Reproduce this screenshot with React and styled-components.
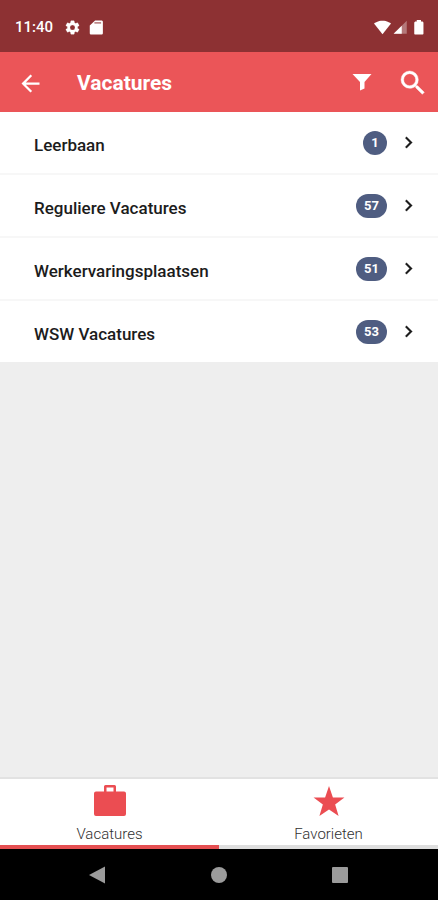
import React, { useState } from "react";
import styled, { createGlobalStyle } from "styled-components";

const GlobalStyle = createGlobalStyle`
  * {
    box-sizing: border-box;
  }

  body {
    margin: 0;
    font-family: Roboto, "Liberation Sans", sans-serif;
  }

  button {
    border: 0;
    padding: 0;
    background: none;
    color: inherit;
    font: inherit;
    cursor: pointer;
  }
`;

const Screen = styled.div`
  display: flex;
  flex-direction: column;
  min-height: 100vh;
  background: #eeeeee;
`;

const StatusBar = styled.div`
  display: flex;
  align-items: center;
  justify-content: space-between;
  height: 52px;
  padding: 2px 11px 0 15px;
  background: #8d3133;
  color: #fff;
`;

const StatusGroup = styled.div`
  display: flex;
  align-items: center;
  gap: ${({ $gap }) => $gap}px;
`;

const Clock = styled.span`
  margin-right: 4px;
  font-size: 15px;
  font-weight: 500;
  line-height: 20px;
`;

const Toolbar = styled.header`
  display: flex;
  align-items: center;
  height: 60px;
  padding: 2px 9px 0 17px;
  background: #eb5558;
  color: #fff;
`;

const Title = styled.h1`
  flex: 1;
  margin: 0 0 0 33px;
  font-size: 21px;
  font-weight: 700;
  line-height: 28px;
`;

const IconButton = styled.button`
  display: flex;
  align-items: center;
  justify-content: center;
  margin-left: ${({ $space }) => $space || 0}px;
`;

const Content = styled.main`
  flex: 1;
`;

const List = styled.ul`
  margin: 0;
  padding: 0;
  list-style: none;
  background: #fff;
`;

const ListItem = styled.li`
  & + & {
    border-top: 2px solid #f7f7f7;
  }
`;

const Row = styled.a`
  display: flex;
  align-items: center;
  height: 61px;
  padding: 0 18px 0 34px;
  color: #1c1c1c;
  text-decoration: none;
`;

const RowLabel = styled.span`
  flex: 1;
  padding-top: 5px;
  font-size: 17px;
  font-weight: 500;
  line-height: 22px;
`;

const Badge = styled.span`
  min-width: 24px;
  height: 24px;
  margin-right: 10px;
  padding: 0 8px;
  border-radius: 12px;
  background: #4f5d81;
  color: #fff;
  font-size: 13px;
  font-weight: 700;
  line-height: 24px;
  text-align: center;
`;

const TabBar = styled.nav`
  display: flex;
  border-top: 2px solid #e2e2e2;
  background: #fff;
`;

const Tab = styled.button`
  display: flex;
  flex: 1;
  flex-direction: column;
  align-items: center;
  height: 70px;
  padding-top: 4px;
  border-bottom: 4px solid ${({ $active }) => ($active ? "#e54f52" : "#dedede")};
  color: #eb4d52;
`;

const TabLabel = styled.span`
  margin-top: 6px;
  color: #303030;
  font-size: 15px;
  font-weight: 300;
  line-height: 18px;
`;

const SystemBar = styled.div`
  display: flex;
  align-items: center;
  justify-content: center;
  gap: 97px;
  height: 51px;
  background: #000;
  color: #9b9b9b;
`;

const Icon = ({ size, children, viewBox = "0 0 24 24" }) => (
  <svg width={size} height={size} viewBox={viewBox} fill="currentColor" aria-hidden="true">
    {children}
  </svg>
);

const BriefcaseIcon = () => (
  <Icon size={36} viewBox="0 0 36 36">
    <path
      fillRule="evenodd"
      d="M13.500 2h9a1.500 1.500 0 0 1 1.500 1.500V8.500h8a2 2 0 0 1 2 2V31a2 2 0 0 1-2 2H4a2 2 0 0 1-2-2V10.500a2 2 0 0 1 2-2h8V3.500A1.500 1.500 0 0 1 13.500 2zm1 2.500v4h7v-4z"
    />
  </Icon>
);

const StarIcon = () => (
  <Icon size={36}>
    <path d="M12 17.600l6.400 4.400-2.300-7.600L22.300 9.700h-7.700L12 2 9.400 9.700H1.700l6.200 4.700L5.600 22z" />
  </Icon>
);

const categories = [
  { id: 1, name: "Leerbaan", count: 1 },
  { id: 2, name: "Reguliere Vacatures", count: 57 },
  { id: 3, name: "Werkervaringsplaatsen", count: 51 },
  { id: 4, name: "WSW Vacatures", count: 53 },
];

const tabs = [
  { id: "vacatures", label: "Vacatures", icon: <BriefcaseIcon /> },
  { id: "favorieten", label: "Favorieten", icon: <StarIcon /> },
];

const App = () => {
  const [activeTab, setActiveTab] = useState("vacatures");

  return (
    <Screen>
      <GlobalStyle />

      <StatusBar>
        <StatusGroup $gap={7}>
          <Clock>11:40</Clock>
          <Icon size={17}>
            <path
              d="M19.140 12.940c.04-.3.06-.61.06-.94s-.02-.64-.07-.94l2.030-1.580a.49.49 0 0 0 .12-.61l-1.920-3.320a.49.49 0 0 0-.59-.22l-2.390.96a7 7 0 0 0-1.620-.94l-.36-2.540a.48.48 0 0 0-.48-.41h-3.840a.47.47 0 0 0-.47.41l-.36 2.540c-.59.24-1.130.57-1.620.94l-2.390-.96a.48.48 0 0 0-.59.22L2.740 8.870a.47.47 0 0 0 .12.61l2.030 1.580c-.05.3-.09.63-.09.94s.02.64.07.94l-2.030 1.580a.49.49 0 0 0-.12.61l1.920 3.320c.12.22.37.29.59.22l2.390-.96c.5.38 1.030.7 1.620.94l.36 2.540c.05.24.24.41.48.41h3.840c.24 0 .44-.17.47-.41l.36-2.540a7 7 0 0 0 1.620-.94l2.390.96c.22.08.47 0 .59-.22l1.920-3.320a.47.47 0 0 0-.12-.61zM12 15.600a3.600 3.600 0 1 1 0-7.200 3.600 3.600 0 0 1 0 7.200z"
              stroke="currentColor"
              strokeWidth="0.400"
            />
          </Icon>
          <Icon size={17}>
            <path d="M19 2h-9L2.500 9v11c0 1.100.9 2 2 2H19c1.100 0 2-.9 2-2V4c0-1.100-.9-2-2-2z" />
            <path d="M9 5.500h9.500" stroke="#8d3133" strokeWidth="2" opacity="0.700" />
          </Icon>
        </StatusGroup>
        <StatusGroup $gap={2}>
          <Icon size={17}>
            <path d="M12 21.500L24 6.500C23 5.500 18.500 2.500 12 2.500S1 5.500 0 6.500z" />
          </Icon>
          <Icon size={15}>
            <path d="M1 22L22 1v21z" opacity="0.350" />
            <path d="M1 22L14 9v13z" />
          </Icon>
          <Icon size={17}>
            <path d="M17 3.500h-1.500V1.500h-6v2H8C6.900 3.500 6 4.400 6 5.500v15c0 .9.600 1.500 1.500 1.500h10c.9 0 1.500-.6 1.500-1.500v-15c0-1.100-.9-2-2-2z" />
          </Icon>
        </StatusGroup>
      </StatusBar>

      <Toolbar>
        <IconButton type="button" aria-label="Terug">
          <Icon size={27}>
            <path d="M20 11H7.830l5.590-5.590L12 4l-8 8 8 8 1.410-1.410L7.830 13H20z" />
          </Icon>
        </IconButton>
        <Title>Vacatures</Title>
        <IconButton type="button" aria-label="Filter">
          <Icon size={20} viewBox="0 0 20 20">
            <path d="M.5 1h19l-7 8v6.500l-4.500 2V9z" />
          </Icon>
        </IconButton>
        <IconButton type="button" aria-label="Zoeken" $space={25}>
          <Icon size={32}>
            <path
              d="M15.500 14h-.79l-.28-.27A6.470 6.470 0 0 0 16 9.500 6.500 6.500 0 1 0 9.500 16c1.610 0 3.090-.59 4.230-1.570l.27.28v.79l5 4.990L20.490 19zm-6 0a4.500 4.500 0 1 1 0-9 4.500 4.500 0 0 1 0 9z"
              stroke="currentColor"
              strokeWidth="0.300"
            />
          </Icon>
        </IconButton>
      </Toolbar>

      <Content>
        <List>
          {categories.map((category) => (
            <ListItem key={category.id}>
              <Row href="#">
                <RowLabel>{category.name}</RowLabel>
                <Badge>{category.count}</Badge>
                <Icon size={23}>
                  <path
                    d="M10 6L8.590 7.410 13.170 12l-4.580 4.590L10 18l6-6z"
                    stroke="currentColor"
                    strokeWidth="0.300"
                  />
                </Icon>
              </Row>
            </ListItem>
          ))}
        </List>
      </Content>

      <TabBar>
        {tabs.map((tab) => (
          <Tab
            key={tab.id}
            type="button"
            $active={tab.id === activeTab}
            onClick={() => setActiveTab(tab.id)}
          >
            {tab.icon}
            <TabLabel>{tab.label}</TabLabel>
          </Tab>
        ))}
      </TabBar>

      <SystemBar>
        <IconButton type="button" aria-label="Vorige">
          <Icon size={24}>
            <path d="M19 3.500v17L3 12z" />
          </Icon>
        </IconButton>
        <IconButton type="button" aria-label="Startscherm">
          <Icon size={24}>
            <circle cx="12" cy="12" r="8" />
          </Icon>
        </IconButton>
        <IconButton type="button" aria-label="Overzicht">
          <Icon size={24}>
            <rect x="4" y="4" width="16" height="16" rx="1" />
          </Icon>
        </IconButton>
      </SystemBar>
    </Screen>
  );
};

export default App;
